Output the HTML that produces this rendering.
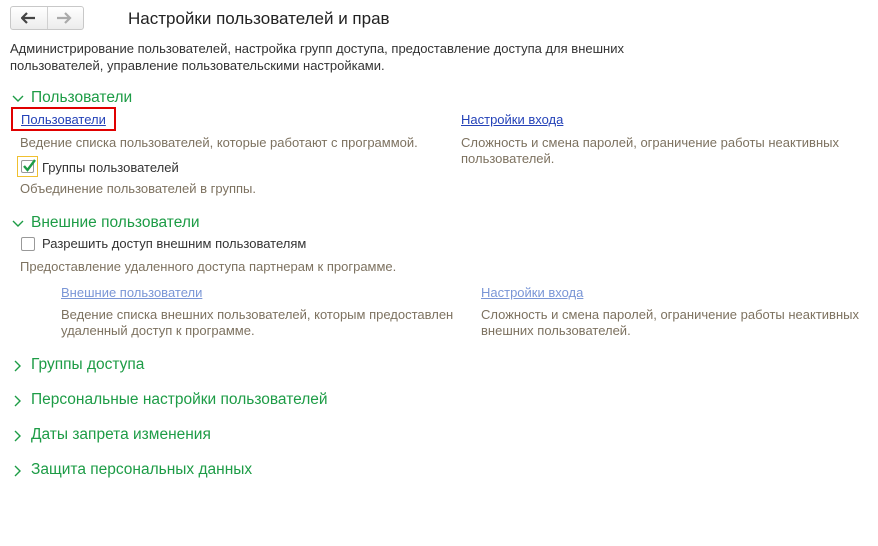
<!DOCTYPE html>
<html><head><meta charset="utf-8"><style>
body{margin:0;width:878px;height:546px;background:#fff;font-family:"Liberation Sans",Arial,sans-serif;font-size:13px;color:#333;position:relative;overflow:hidden}
.a{position:absolute;white-space:nowrap}
.h{color:#1d9c46;font-size:15.5px}
.d{color:#7d7260;line-height:16px}
.l{color:#2442b8;text-decoration:underline}
.ld{color:#7a96d6;text-decoration:underline}
</style></head><body>
<div class="a" style="left:10px;top:6px;width:72px;height:22px;border:1px solid #c8c8c8;border-radius:3px;background:linear-gradient(#fff,#ececec)"></div>
<div class="a" style="left:47px;top:7px;width:1px;height:22px;background:#d0d0d0"></div>
<svg class="a" style="left:21px;top:12px" width="16" height="12"><path d="M1 6H14M6 1L1 6L6 11" stroke="#444" stroke-width="2.2" fill="none"/></svg>
<svg class="a" style="left:56px;top:12px" width="16" height="12"><path d="M1 6H14M9 1L14 6L9 11" stroke="#aaa" stroke-width="2.2" fill="none"/></svg>
<div class="a" style="left:128px;top:9px;font-size:17px;color:#222">Настройки пользователей и прав</div>
<div class="a" style="left:10px;top:40px;line-height:17px;color:#333">Администрирование пользователей, настройка групп доступа, предоставление доступа для внешних<br>пользователей, управление пользовательскими настройками.</div>
<svg class="a" style="left:12px;top:95px" width="12" height="8"><path d="M1 1L6 6L11 1" stroke="#1d9c46" stroke-width="1.4" fill="none"/></svg>
<div class="a h" style="left:31px;top:89px">Пользователи</div>
<div class="a" style="left:11px;top:107px;width:101px;height:20px;border:2px solid #e00000"></div>
<div class="a l" style="left:21px;top:112px">Пользователи</div>
<div class="a d" style="left:20px;top:135px">Ведение списка пользователей, которые работают с программой.</div>
<div class="a" style="left:17px;top:156px;width:21px;height:21px;border:1px solid #f0c030;box-sizing:border-box"></div>
<div class="a" style="left:21px;top:160px;width:13px;height:13px;border:1px solid #999;border-radius:2px;box-sizing:border-box;background:#fff"></div>
<svg class="a" style="left:21px;top:158px" width="16" height="15"><path d="M3 8L6.5 12L14 2" stroke="#1d9c46" stroke-width="2.4" fill="none"/></svg>
<div class="a" style="left:42px;top:160px;color:#333">Группы пользователей</div>
<div class="a d" style="left:20px;top:181px">Объединение пользователей в группы.</div>
<div class="a l" style="left:461px;top:112px">Настройки входа</div>
<div class="a d" style="left:461px;top:135px">Сложность и смена паролей, ограничение работы неактивных<br>пользователей.</div>
<svg class="a" style="left:12px;top:220px" width="12" height="8"><path d="M1 1L6 6L11 1" stroke="#1d9c46" stroke-width="1.4" fill="none"/></svg>
<div class="a h" style="left:31px;top:214px">Внешние пользователи</div>
<div class="a" style="left:21px;top:237px;width:14px;height:14px;border:1px solid #999;border-radius:2px;box-sizing:border-box"></div>
<div class="a" style="left:42px;top:236px;color:#333">Разрешить доступ внешним пользователям</div>
<div class="a d" style="left:20px;top:259px">Предоставление удаленного доступа партнерам к программе.</div>
<div class="a ld" style="left:61px;top:285px">Внешние пользователи</div>
<div class="a d" style="left:61px;top:307px">Ведение списка внешних пользователей, которым предоставлен<br>удаленный доступ к программе.</div>
<div class="a ld" style="left:481px;top:285px">Настройки входа</div>
<div class="a d" style="left:481px;top:307px">Сложность и смена паролей, ограничение работы неактивных<br>внешних пользователей.</div>
<svg class="a" style="left:14px;top:360px" width="8" height="12"><path d="M1 1L6 6L1 11" stroke="#1d9c46" stroke-width="1.4" fill="none"/></svg>
<div class="a h" style="left:31px;top:356px">Группы доступа</div>
<svg class="a" style="left:14px;top:395px" width="8" height="12"><path d="M1 1L6 6L1 11" stroke="#1d9c46" stroke-width="1.4" fill="none"/></svg>
<div class="a h" style="left:31px;top:391px">Персональные настройки пользователей</div>
<svg class="a" style="left:14px;top:430px" width="8" height="12"><path d="M1 1L6 6L1 11" stroke="#1d9c46" stroke-width="1.4" fill="none"/></svg>
<div class="a h" style="left:31px;top:426px">Даты запрета изменения</div>
<svg class="a" style="left:14px;top:465px" width="8" height="12"><path d="M1 1L6 6L1 11" stroke="#1d9c46" stroke-width="1.4" fill="none"/></svg>
<div class="a h" style="left:31px;top:461px">Защита персональных данных</div>
</body></html>
